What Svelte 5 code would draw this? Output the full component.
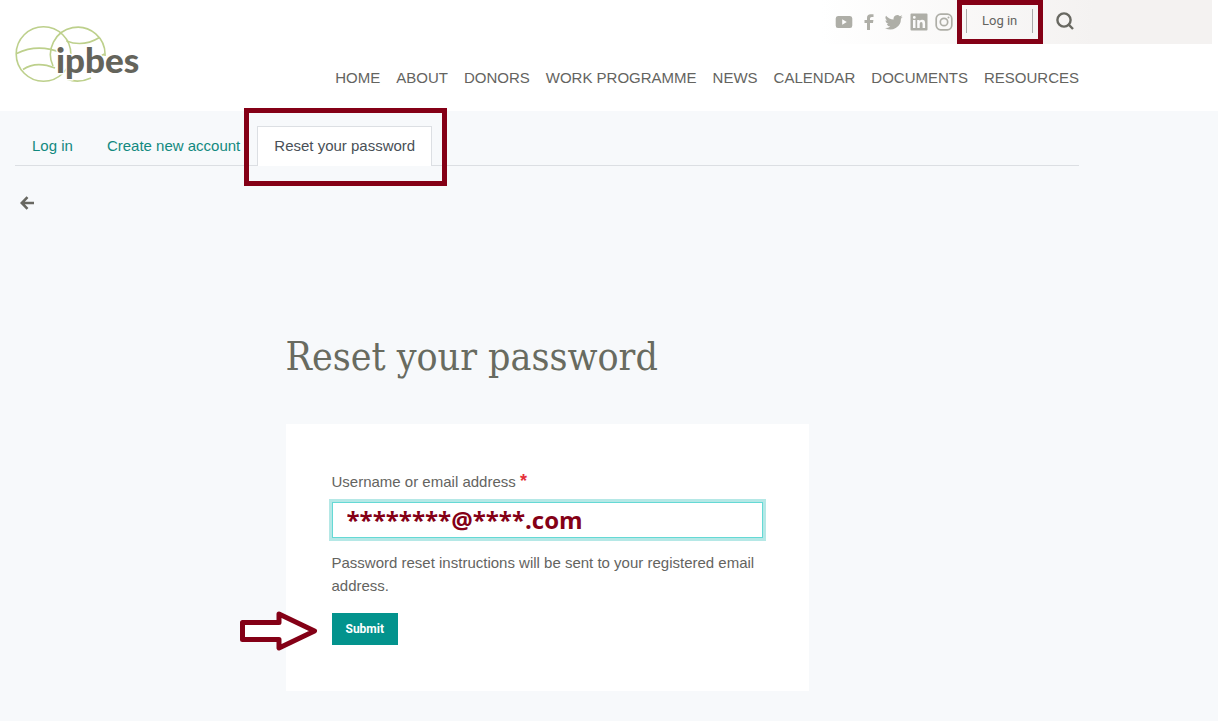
<script>
  let username = $state('********@****.com');
  const links = ['HOME', 'ABOUT', 'DONORS', 'WORK PROGRAMME', 'NEWS', 'CALENDAR', 'DOCUMENTS', 'RESOURCES'];
</script>

<header>
  <a class="logo" href="#home" aria-label="ipbes">
    <svg width="124" height="60" viewBox="0 0 124 60">
      <g fill="none" stroke="#bdd08c" stroke-width="1.6">
        <circle cx="28.500" cy="29" r="27.300" />
        <path d="M38 41A27.300 27.300 0 1 1 90 31M52 54.300Q64 58.500 76 53" />
        <path d="M1.700 28.500Q23 18 47 28M8 44.500Q21 35.500 40 43M51.500 16Q68 22.500 84.500 12.500M78 34Q84 33 89.500 29" />
      </g>
      <text x="41" y="48">ipbes</text>
    </svg>
  </a>
  <div class="head-right">
    <div class="topbar">
      <div class="social">
        <a href="#youtube" aria-label="YouTube"><svg width="18" height="18" viewBox="0 0 18 18"><path fill-rule="evenodd" d="M3 3H15Q17.300 3 17.300 5.500V12.500Q17.300 15 15 15H3Q.7 15 .7 12.500V5.500Q.7 3 3 3ZM7.200 6.300V11.700L11.800 9Z" /></svg></a>
        <a href="#facebook" aria-label="Facebook"><svg width="18" height="18" viewBox="0 0 18 18"><path d="M7 17V10H4.500V7.100H7V5Q7 1.300 10.700 1.300H13.500V4H11.600Q10 4 10 5.500V7.100H13.400L13 10H10V17Z" /></svg></a>
        <a href="#twitter" aria-label="Twitter"><svg width="18" height="18" viewBox="0 0 24 24"><path d="M23.600 4.900a10 10 0 0 1-2.800.8 4.900 4.900 0 0 0 2.100-2.700 10 10 0 0 1-3.100 1.200 4.900 4.900 0 0 0-8.300 4.500A13.900 13.900 0 0 1 1.400 3.600a4.900 4.900 0 0 0 1.500 6.500 5 5 0 0 1-2.200-.6 4.900 4.900 0 0 0 3.900 4.900 5 5 0 0 1-2.200.1 4.900 4.900 0 0 0 4.600 3.400A9.900 9.900 0 0 1 0 19.900a13.900 13.900 0 0 0 21.200-12.400 10 10 0 0 0 2.400-2.600Z" /></svg></a>
        <a href="#linkedin" aria-label="LinkedIn"><svg width="18" height="18" viewBox="0 0 18 18"><path fill-rule="evenodd" d="M1.500.5H16.500Q17.500.5 17.500 1.500V16.500Q17.500 17.500 16.500 17.500H1.500Q.5 17.500.5 16.500V1.500Q.5.5 1.500.5ZM3 7V15H5.500V7ZM4.300 3A1.400 1.400 0 1 0 4.300 5.800A1.400 1.400 0 1 0 4.300 3ZM7.200 7V15H9.700V10.800Q9.700 9 11.200 9Q12.600 9 12.600 10.900V15H15.100V10.200Q15.100 6.800 12.200 6.800Q10.400 6.800 9.600 8V7Z" /></svg></a>
        <a href="#instagram" aria-label="Instagram"><svg width="18" height="18" viewBox="0 0 18 18"><g fill="none" stroke="#aeaea7" stroke-width="1.700"><rect x="1.200" y="1.200" width="15.600" height="15.600" rx="4.500" /><circle cx="9" cy="9" r="3.700" /></g><circle cx="13.500" cy="4.600" r="1" /></svg></a>
      </div>
      <div class="login marked"><a href="#login">Log in</a></div>
      <button class="search" aria-label="Search">
        <svg width="18" height="18" viewBox="0 0 18 18"><g fill="none" stroke="#686861" stroke-width="2.400"><circle cx="8" cy="8" r="6.600" /><path d="M12.700 12.700L17 17" /></g></svg>
      </button>
    </div>
    <nav aria-label="Main">
      {#each links as link}<a href="#{link}">{link}</a>{/each}
    </nav>
  </div>
</header>

<main>
  <nav class="tabs" aria-label="Account">
    <a href="#login">Log in</a>
    <a href="#create">Create new account</a>
    <a class="active marked" href="#reset" aria-current="page">Reset your password</a>
  </nav>
  <a class="back" href="#back" aria-label="Back">
    <svg width="14" height="14" viewBox="0 0 14 14"><path d="M14 7H2M7.500 1.200L1.800 7L7.500 12.800" fill="none" stroke="#686861" stroke-width="2.600" /></svg>
  </a>
  <section>
    <h1>Reset your password</h1>
    <form onsubmit={(e) => e.preventDefault()}>
      <label for="username">Username or email address <span>*</span></label>
      <input id="username" type="text" bind:value={username} />
      <p>Password reset instructions will be sent to your registered email address.</p>
      <div class="actions">
        <svg class="pointer" width="78" height="40" viewBox="0 0 78 40"><path d="M2.500 11.500H39V3L74.500 20L39 37V28.500H2.500Z" fill="#fff" stroke="#840016" stroke-width="5" stroke-linejoin="round" /></svg>
        <button type="submit">Submit</button>
      </div>
    </form>
  </section>
</main>

<style>
  :global(body) {
    margin: 0;
    background: #f7f9fb;
    color: #64645f;
    font: 15px/23px "Liberation Sans", Arial, sans-serif;
  }
  a { color: inherit; text-decoration: none; }
  svg { display: block; }
  header { display: flex; min-height: 111px; background: #fff; }
  .logo { padding: 25px 0 0 15px; }
  .logo text {
    font: 900 35px Lato, sans-serif;
    fill: #64645b;
    stroke: #fff;
    stroke-width: 3px;
    paint-order: stroke;
  }
  .head-right { flex: 1; }
  .topbar {
    box-sizing: border-box;
    display: flex;
    width: 392px;
    height: 44px;
    margin: 0 6px 0 auto;
    padding-left: 15px;
    background: linear-gradient(90deg, #fff, #f4f2f1 70%);
  }
  .social { display: flex; align-items: center; gap: 7px; fill: #aeaea7; }
  .marked { position: relative; }
  .marked::after {
    content: "";
    position: absolute;
    border: 5px solid #840016;
    pointer-events: none;
  }
  .login {
    align-self: flex-start;
    margin: 9px 0 0 13px;
    padding: 0 15px;
    border: solid #aaa;
    border-width: 0 1px;
    font: 13px/24px Roboto, sans-serif;
  }
  .login::after { inset: -9px -11px -11px -10px; }
  .search { align-self: center; margin: 0 0 3px 23px; padding: 0; border: 0; background: none; }
  header nav {
    display: flex;
    justify-content: flex-end;
    gap: 16px;
    padding: 22px 139px 0 0;
    color: #64645f;
  }
  main { padding: 15px 139px 30px 15px; }
  .tabs { display: flex; border-bottom: 1px solid #dcdfe3; }
  .tabs a {
    margin-bottom: -1px;
    padding: 7px 16px 9px;
    border: 1px solid transparent;
    border-bottom: 0;
    color: #12897f;
  }
  .tabs .active { border-color: #dcdfe3; background: #fff; color: #495057; }
  .tabs .active::after { inset: -19px -16px -20px -14px; }
  .back { display: block; width: 14px; margin: 30px 5px 0; }
  section { max-width: 523px; margin: 122px auto 0; }
  h1 {
    margin: 0;
    color: #686b60;
    font: 400 39px/50px "Roboto Slab", "DejaVu Serif Condensed", "DejaVu Serif", serif;
  }
  form { margin-top: 42px; padding: 46px; background: #fff; }
  label, p { display: block; margin: 0; }
  label span { color: #e5303a; font-weight: 700; font-size: 18px; line-height: 18px; }
  input {
    box-sizing: border-box;
    width: 100%;
    height: 36px;
    margin: 9px 0 13px;
    padding: 0 14px 2px;
    border: 1px solid #65d9d5;
    outline: 0;
    box-shadow: 0 0 0 3px #b5e8e6;
    background: #fff;
    color: #840016;
    font: 700 24px "Open Sans", sans-serif;
  }
  .actions { position: relative; margin-top: 16px; }
  .pointer { position: absolute; top: -2px; right: calc(100% + 14px); }
  .actions button {
    display: block;
    height: 32px;
    padding: 0 14px;
    border: 0;
    background: #03938d;
    color: #fff;
    font: 700 12px Roboto, sans-serif;
  }
</style>
